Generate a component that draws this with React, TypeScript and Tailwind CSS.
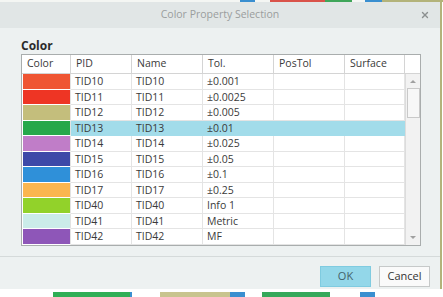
import { X } from 'lucide-react'

type Row = { color: string; pid: string; name: string; tol: string }

const rows: Row[] = [
  { color: '#ef5533', pid: 'TID10', name: 'TID10', tol: '±0.001' },
  { color: '#ee3524', pid: 'TID11', name: 'TID11', tol: '±0.0025' },
  { color: '#c4be7c', pid: 'TID12', name: 'TID12', tol: '±0.005' },
  { color: '#26a84a', pid: 'TID13', name: 'TID13', tol: '±0.01' },
  { color: '#c07dc8', pid: 'TID14', name: 'TID14', tol: '±0.025' },
  { color: '#3d49a8', pid: 'TID15', name: 'TID15', tol: '±0.05' },
  { color: '#2f90d9', pid: 'TID16', name: 'TID16', tol: '±0.1' },
  { color: '#fbb64f', pid: 'TID17', name: 'TID17', tol: '±0.25' },
  { color: '#92d22a', pid: 'TID40', name: 'TID40', tol: 'Info 1' },
  { color: '#cbece9', pid: 'TID41', name: 'TID41', tol: 'Metric' },
  { color: '#8e56b8', pid: 'TID42', name: 'TID42', tol: 'MF' },
]

const SELECTED = 'TID13'

const cols = 'grid grid-cols-[49px_61px_71px_71px_71px_60px]'

export default function App() {
  return (
    <div
      className="w-[443px] h-[297px] bg-white overflow-hidden flex flex-col"
      style={{ fontFamily: '"Open Sans", "Noto Sans", sans-serif' }}
    >
      <div className="h-[2px] flex shrink-0">
        <div className="w-[240px] bg-[#f4f6f3]" />
        <div className="w-[15px] bg-[#3a8fd0]" />
        <div className="w-[15px] bg-[#f4f6f3]" />
        <div className="w-[55px] bg-[#d9534a]" />
        <div className="w-[27px] bg-[#3fa65a]" />
        <div className="w-[13px] bg-[#f4f6f3]" />
        <div className="w-[17px] bg-[#3a8fd0]" />
        <div className="flex-1 bg-[#b3b37a]" />
      </div>

      <div className="flex shrink-0">
        <div className="w-[440px] h-[287px] flex flex-col bg-[#edf1f1]">
          {/* title bar */}
          <div className="h-[26px] bg-[#e1e6e6] relative flex items-center justify-center">
            <span className="text-[10.5px] text-[#9a9d9d]">Color Property Selection</span>
            <X className="absolute right-[10px] top-[8px] w-[10px] h-[10px] text-[#8c9090]" strokeWidth={3.2} />
          </div>

          {/* body */}
          <div className="pl-[21px] pr-[19px] pt-[10px]">
            <div className="h-[15px] text-[12px] font-bold text-[#2b2b2b] leading-[15px]">Color</div>
            <div className="mt-[1px] w-[400px] border border-[#a9adad] bg-white flex text-[10.5px] text-[#3a3a3a]">
              <div className="flex flex-col">
                <div className={`${cols} h-[19px] border-b border-[#d4d4d4]`}>
                  {['Color', 'PID', 'Name', 'Tol.', 'PosTol', 'Surface'].map((h) => (
                    <div key={h} className="border-r border-[#d4d4d4] pl-[5px] flex items-center">
                      {h}
                    </div>
                  ))}
                </div>
                {rows.map((r) => {
                  const sel = r.pid === SELECTED
                  return (
                    <div key={r.pid} className={`${cols} h-[15.5px]`}>
                      <div className="border-r border-[#e2e2e2] border-b border-b-white pl-[1px]">
                        <div className="h-full" style={{ backgroundColor: r.color }} />
                      </div>
                      {[r.pid, r.name, r.tol, '', ''].map((v, i) => (
                        <div
                          key={i}
                          className={`border-r border-b pl-[4px] flex items-center leading-none ${
                            sel ? 'bg-[#a2dcea] border-[#a2dcea]' : 'border-[#e4e4e4]'
                          }`}
                        >
                          {v}
                        </div>
                      ))}
                    </div>
                  )
                })}
              </div>

              {/* scrollbar */}
              <div className="w-[15px] flex flex-col">
                <div className="h-[19px] border-b border-[#d4d4d4]" />
                <div className="flex-1 bg-[#f2f2f2] border-l border-[#dcdcdc] flex flex-col items-center">
                  <div className="h-[14px] flex items-center justify-center">
                    <div className="w-0 h-0 border-l-[3px] border-r-[3px] border-b-[3px] border-l-transparent border-r-transparent border-b-[#a0a0a0]" />
                  </div>
                  <div className="w-[13px] h-[30px] bg-[#f7f7f7] border border-[#c9c9c9]" />
                  <div className="flex-1" />
                  <div className="h-[14px] flex items-center justify-center">
                    <div className="w-0 h-0 border-l-[3px] border-r-[3px] border-t-[3px] border-l-transparent border-r-transparent border-t-[#a0a0a0]" />
                  </div>
                </div>
              </div>
            </div>
          </div>

          <div className="mt-[10px] h-px bg-[#d5dada]" />

          {/* footer */}
          <div className="flex justify-end gap-[8px] pr-[10px] pt-[9px]">
            <button className="w-[51px] h-[21px] bg-[#93d7e9] border border-[#7fcbe0] text-[11px] text-[#44626a]">
              OK
            </button>
            <button className="w-[51px] h-[21px] bg-[#fafafa] border border-[#c6c9c9] text-[11px] text-[#333]">
              Cancel
            </button>
          </div>
        </div>
        <div className="w-[2px] bg-[#b3b37a]" />
        <div className="flex-1 bg-white" />
      </div>

      <div className="flex-1 flex pt-[3px]">
        <div className="w-[53px]" />
        <div className="w-[77px] bg-[#2fae55]" />
        <div className="w-[2px] bg-[#3a8fd0]" />
        <div className="w-[28px]" />
        <div className="w-[70px] bg-[#c8c48e]" />
        <div className="w-[15px] bg-[#3a8fd0]" />
        <div className="w-[17px]" />
        <div className="w-[68px] bg-[#35a85a]" />
        <div className="w-[30px]" />
        <div className="w-[15px] bg-[#3a8fd0]" />
      </div>
    </div>
  )
}
